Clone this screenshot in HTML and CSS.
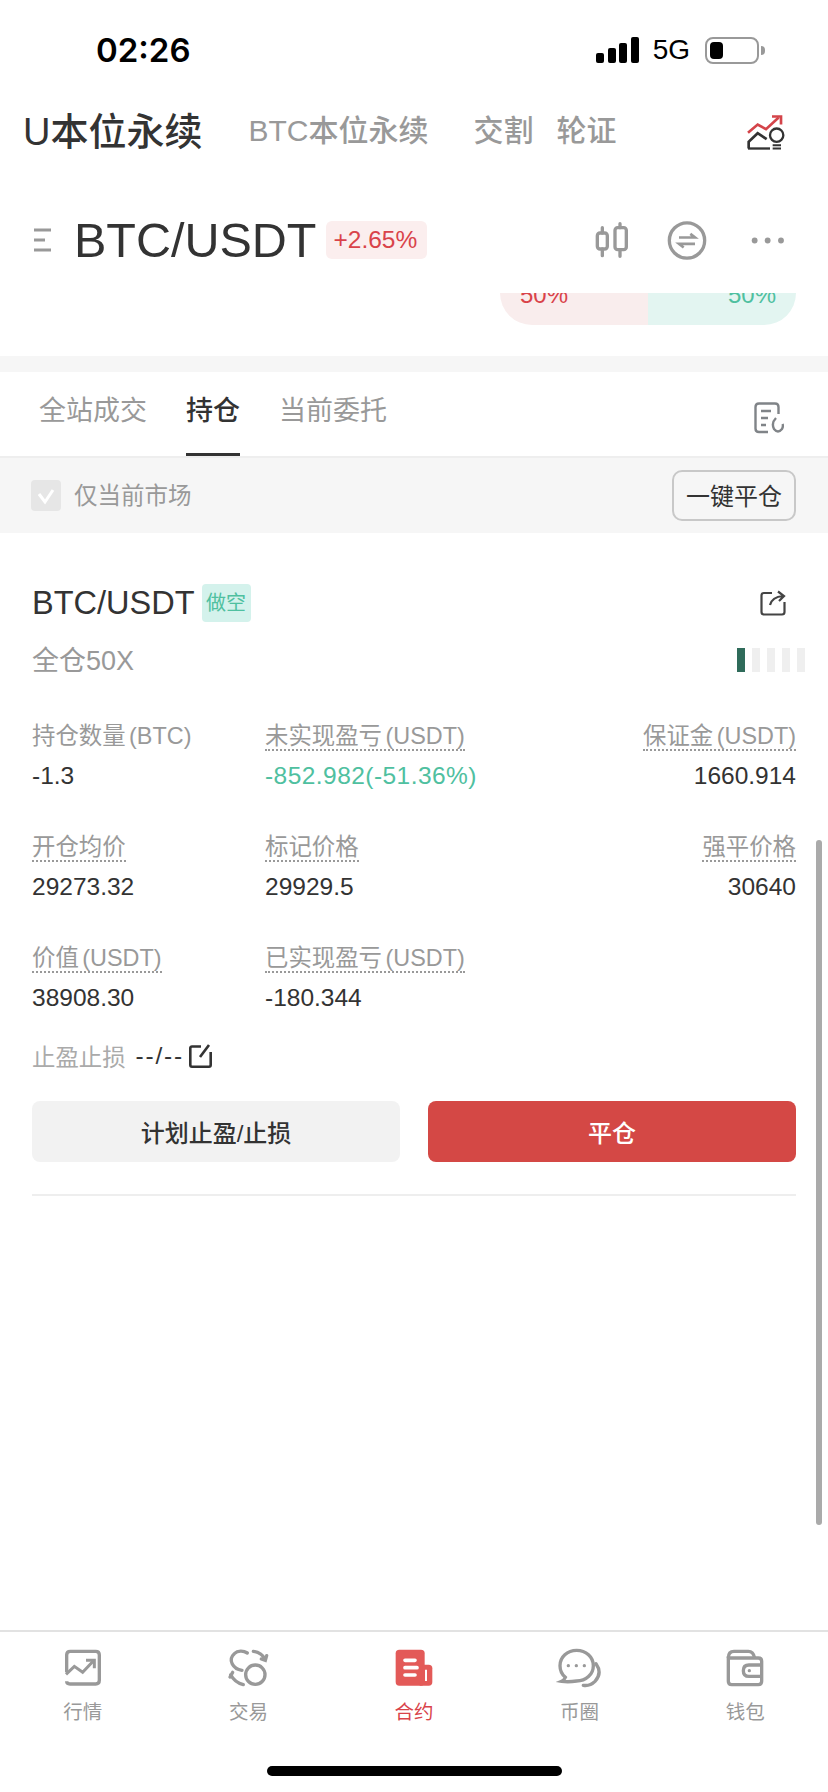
FILE: index.html
```html
<!DOCTYPE html>
<html lang="zh-CN">
<head>
  <meta charset="UTF-8">
  <meta name="viewport" content="width=device-width, initial-scale=1.0">
  <title>BTC/USDT 持仓</title>
  <link rel="stylesheet" href="styles.css">
</head>
<body>
  <div class="screen">
    <div class="status-bar">
      <span class="time">02:26</span>
      <div class="status-right">
        <svg class="signal" viewBox="0 0 43 26">
          <rect x="0" y="16" width="8" height="10" rx="2"/>
          <rect x="12" y="11" width="8" height="15" rx="2"/>
          <rect x="23" y="6" width="8" height="20" rx="2"/>
          <rect x="35" y="0" width="8" height="26" rx="2"/>
        </svg>
        <span class="net">5G</span>
        <div class="battery"><div class="battery-fill"></div></div>
        <div class="battery-nub"></div>
      </div>
    </div>

    <div class="market-tabs">
      <span class="market-main">U本位永续</span>
      <span class="market-tab">BTC本位永续</span>
      <span class="market-tab">交割</span>
      <span class="market-tab near">轮证</span>
      <svg class="idea-icon" viewBox="560 315 120 110" fill="none">
        <path d="M566 371 L595 346 L620 360 L658 325" stroke="#d4444a" stroke-width="8"/>
        <path d="M638 322 H665 V346" stroke="#d4444a" stroke-width="8"/>
        <path d="M568 418 V398 L595 372 L622 390" stroke="#333" stroke-width="8"/>
        <path d="M566 418 H632" stroke="#333" stroke-width="7"/>
        <circle cx="652" cy="378" r="20" stroke="#333" stroke-width="7"/>
        <path d="M640 408 H665 M640 418 H665" stroke="#333" stroke-width="6"/>
      </svg>
    </div>

    <div class="pair-head">
      <svg class="menu-icon" viewBox="0 0 17 24" fill="none" stroke="#999" stroke-width="3">
        <path d="M0 2 H17 M0 12 H11 M0 22 H17"/>
      </svg>
      <span class="pair-name">BTC/USDT</span>
      <span class="change-badge">+2.65%</span>
      <div class="pair-actions">
        <svg class="icon-candle" viewBox="100 635 105 108" fill="none" stroke="#999" stroke-width="10" stroke-linecap="round">
          <rect x="110" y="668" width="30" height="48" rx="8"/>
          <path d="M125 652 V668 M125 716 V736"/>
          <rect x="163" y="652" width="34" height="66" rx="8"/>
          <path d="M178 640 V652 M178 718 V738"/>
        </svg>
        <svg class="icon-swap" viewBox="320 632 120 116" fill="none" stroke="#999">
          <circle cx="380" cy="690" r="53" stroke-width="10"/>
          <path d="M356 681 H404 L390 670 M404 700 H356 L370 711" stroke-width="8"/>
        </svg>
        <svg class="icon-more" viewBox="570 670 105 40" fill="#999">
          <circle cx="583" cy="690" r="9"/>
          <circle cx="623" cy="690" r="9"/>
          <circle cx="664" cy="690" r="9"/>
        </svg>
      </div>
    </div>

    <div class="ratio-bar">
      <div class="ratio-buy"><span>50%</span></div>
      <div class="ratio-sell"><span>50%</span></div>
    </div>

    <div class="band"></div>

    <div class="list-tabs">
      <span class="list-tab">全站成交</span>
      <span class="list-tab active">持仓</span>
      <span class="list-tab">当前委托</span>
      <svg class="record-icon" viewBox="0 0 30 32" fill="none" stroke="#808488" stroke-width="2.4">
        <path d="M14 30 H5 Q1.5 30 1.5 26.5 V5 Q1.5 1.5 5 1.5 H21 Q24.5 1.5 24.5 5 V12"/>
        <path d="M7 9 H17 M7 16 H14 M7 23 H12"/>
        <path d="M22 16 Q17 21 20 27 Q24 32 28 27 Q29.5 24 28.5 22"/>
      </svg>
    </div>

    <div class="filter-row">
      <div class="checkbox">
        <svg viewBox="0 0 30 31" fill="none" stroke="#fff" stroke-width="3"><path d="M8 14 L14 22 L22 10"/></svg>
      </div>
      <span class="filter-text">仅当前市场</span>
      <button class="close-all">一键平仓</button>
    </div>

    <div class="position">
      <div class="pos-title">
        <span class="pos-name">BTC/USDT</span>
        <span class="side-tag">做空</span>
        <svg class="share-icon" viewBox="0 0 26 26" fill="none" stroke="#444" stroke-width="2.2">
          <path d="M12 3 H4 Q1.5 3 1.5 5.500 V22 Q1.500 24.500 4 24.500 H22 Q24.500 24.500 24.500 22 V12"/>
          <path d="M10 15 Q12 7 23 6 M18 1.500 L24 6 L19 11"/>
        </svg>
      </div>
      <div class="pos-sub">
        <span class="margin-mode">全仓50X</span>
        <div class="risk-bars">
          <i class="on"></i><i></i><i></i><i></i><i></i>
        </div>
      </div>

      <div class="stats">
        <div class="stat">
          <span class="stat-label plain">持仓数量 (BTC)</span>
          <span class="stat-value">-1.3</span>
        </div>
        <div class="stat">
          <span class="stat-label">未实现盈亏 (USDT)</span>
          <span class="stat-value green">-852.982(-51.36%)</span>
        </div>
        <div class="stat right">
          <span class="stat-label">保证金 (USDT)</span>
          <span class="stat-value">1660.914</span>
        </div>
        <div class="stat">
          <span class="stat-label">开仓均价</span>
          <span class="stat-value">29273.32</span>
        </div>
        <div class="stat">
          <span class="stat-label">标记价格</span>
          <span class="stat-value">29929.5</span>
        </div>
        <div class="stat right">
          <span class="stat-label">强平价格</span>
          <span class="stat-value">30640</span>
        </div>
        <div class="stat">
          <span class="stat-label">价值 (USDT)</span>
          <span class="stat-value">38908.30</span>
        </div>
        <div class="stat">
          <span class="stat-label">已实现盈亏 (USDT)</span>
          <span class="stat-value">-180.344</span>
        </div>
      </div>

      <div class="tpsl">
        <span class="tpsl-label">止盈止损</span>
        <span class="tpsl-value">--/--</span>
        <svg class="edit-icon" viewBox="0 0 23 24" fill="none" stroke="#333" stroke-width="2.600">
          <path d="M12 2.500 H3 Q1.300 2.500 1.300 4 V21 Q1.300 22.700 3 22.700 H20 Q21.700 22.700 21.700 21 V8"/>
          <path d="M11 13 L20 1"/>
        </svg>
      </div>

      <div class="pos-buttons">
        <button class="btn-plan">计划止盈/止损</button>
        <button class="btn-close">平仓</button>
      </div>
      <div class="pos-line"></div>
    </div>

    <div class="scrollbar"></div>

    <div class="tabbar">
      <div class="tab">
        <svg viewBox="116 55 150 120" fill="none" stroke="#999" stroke-width="10">
          <path d="M142 128 V76 Q142 65 153 65 H229 Q240 65 240 76 V152 Q240 163 229 163 H152 Q142 163 142 155"/>
          <path d="M140 134 L165 110 L190 128 L222 94" stroke-width="9"/>
          <path d="M200 92 H225 V116" stroke-width="9"/>
        </svg>
        <span>行情</span>
      </div>
      <div class="tab">
        <svg viewBox="611 55 150 120" fill="none" stroke="#999" stroke-width="10" stroke-linecap="round">
          <circle cx="708" cy="135" r="29"/>
          <path d="M668 122 C640 118 625 90 645 72 C655 62 672 62 684 70"/>
          <path d="M702 65 Q727 68 738 90 M742 78 L738 92 L726 88"/>
          <path d="M634 135 Q646 158 672 165 M632 142 L640 128"/>
        </svg>
        <span>交易</span>
      </div>
      <div class="tab active">
        <svg viewBox="28 55 150 120">
          <rect x="48" y="60" width="87" height="108" rx="11" fill="#e35a58"/>
          <path d="M130 105 H147 Q158 105 158 116 V157 Q158 168 147 168 H120 Z" fill="#e35a58"/>
          <path d="M139 120 V154" stroke="#fff" stroke-width="6"/>
          <path d="M76 92 H106 M76 114 H112 M76 136 H106" stroke="#fff" stroke-width="11" stroke-linecap="round"/>
        </svg>
        <span>合约</span>
      </div>
      <div class="tab">
        <svg viewBox="525 55 150 120" fill="none" stroke="#999" stroke-width="10" stroke-linecap="round">
          <path d="M590 62 C562 62 540 82 540 108 C540 125 548 136 556 143 Q552 152 545 155 C565 158 578 156 590 154 C618 154 640 134 640 108 C640 82 618 62 590 62 Z"/>
          <path d="M648 102 Q668 130 645 155 Q630 170 610 167"/>
          <circle cx="565" cy="108" r="5" fill="#999" stroke="none"/>
          <circle cx="589" cy="108" r="5" fill="#999" stroke="none"/>
          <circle cx="613" cy="108" r="5" fill="#999" stroke="none"/>
        </svg>
        <span>币圈</span>
      </div>
      <div class="tab">
        <svg viewBox="1020 55 150 120" fill="none" stroke="#999" stroke-width="10">
          <path d="M1045 85 V155 Q1045 165 1055 165 H1135 Q1145 165 1145 155 V95 Q1145 85 1135 85 H1045 Z"/>
          <path d="M1045 85 Q1045 65 1062 65 H1105 Q1120 65 1124 85"/>
          <path d="M1145 106 H1107 Q1090 106 1090 123 Q1090 140 1107 140 H1145"/>
          <circle cx="1108" cy="123" r="5" fill="#999" stroke="none"/>
        </svg>
        <span>钱包</span>
      </div>
    </div>

    <div class="home-bar"></div>
  </div>
</body>
</html>
```

FILE: styles.css
```css
body {
  margin: 0;
  background-color: #fff;
  font-family: "Liberation Sans", "Noto Sans CJK SC", sans-serif;
  color: #333;
}

.screen {
  position: relative;
  width: 828px;
  height: 1792px;
  overflow: hidden;
  background-color: #fff;
  display: flex;
  flex-direction: column;
}

/* status bar */
.status-bar {
  height: 100px;
  padding: 0 63px 0 96px;
  display: flex;
  align-items: center;
  justify-content: space-between;
  box-sizing: border-box;
}

.time {
  font-family: Inter, "Liberation Sans", sans-serif;
  font-size: 33px;
  font-weight: 600;
  color: #000;
}

.status-right {
  display: flex;
  align-items: center;
}

.signal {
  width: 43px;
  height: 26px;
  fill: #000;
}

.net {
  margin-left: 14px;
  font-size: 28px;
  color: #000;
}

.battery {
  width: 54px;
  height: 27px;
  margin-left: 15px;
  padding: 3px;
  border: 2px solid #999;
  border-radius: 8px;
  box-sizing: border-box;
}

.battery-fill {
  width: 13px;
  height: 17px;
  background-color: #000;
  border-radius: 4px;
}

.battery-nub {
  width: 4px;
  height: 9px;
  margin-left: 2px;
  background-color: #999;
  border-radius: 0 4px 4px 0;
}

/* market tabs */
.market-tabs {
  height: 60px;
  margin-bottom: 27px;
  padding: 0 42px 4px 23px;
  display: flex;
  align-items: center;
  box-sizing: border-box;
}

.market-main {
  font-size: 38px;
  font-weight: 500;
  color: #333;
  margin-right: 46px;
}

.market-tab {
  font-size: 30px;
  font-weight: 500;
  color: #999;
  margin-right: 45px;
}

.market-tab.near {
  margin-left: -22px;
}

.idea-icon {
  width: 40px;
  height: 37px;
  margin-left: auto;
  margin-top: 9px;
}

/* pair header */
.pair-head {
  height: 106px;
  padding: 0 43px 0 34px;
  display: flex;
  align-items: center;
  box-sizing: border-box;
}

.menu-icon {
  width: 17px;
  height: 24px;
}

.pair-name {
  margin-left: 23px;
  font-size: 48.5px;
  color: #333;
}

.change-badge {
  margin-left: 9px;
  height: 38px;
  line-height: 38px;
  padding: 0 10px 0 8px;
  font-size: 24.5px;
  color: #d9434a;
  background-color: #fbeeee;
  border-radius: 6px;
}

.pair-actions {
  margin-left: auto;
  display: flex;
  align-items: center;
}

.icon-candle {
  width: 35px;
  height: 36px;
}

.icon-swap {
  width: 40px;
  height: 39px;
  margin-left: 38px;
}

.icon-more {
  width: 35px;
  height: 13px;
  margin-left: 43px;
}

/* clipped long/short ratio */
.ratio-bar {
  width: 296px;
  height: 32px;
  margin-left: 500px;
  display: flex;
  overflow: hidden;
  border-radius: 0 0 32px 32px;
  font-size: 24px;
  line-height: 20px;
}

.ratio-buy {
  width: 148px;
  background-color: #f9eded;
  color: #d9434a;
}

.ratio-buy span {
  display: block;
  margin: -8px 0 0 20px;
}

.ratio-sell {
  width: 148px;
  background-color: #e3f5f1;
  color: #4fc0a0;
  text-align: right;
}

.ratio-sell span {
  display: block;
  margin: -8px 20px 0 0;
}

.band {
  height: 16px;
  margin-top: 31px;
  background-color: #f6f6f6;
}

/* list tabs */
.list-tabs {
  height: 86px;
  padding: 0 44px 0 39px;
  display: flex;
  align-items: stretch;
  border-bottom: 2px solid #eee;
  box-sizing: border-box;
}

.list-tab {
  height: 84px;
  line-height: 78px;
  margin-right: 39px;
  font-size: 27px;
  color: #999;
  box-sizing: border-box;
}

.list-tab.active {
  color: #333;
  font-weight: 500;
  border-bottom: 3px solid #333;
}

.record-icon {
  width: 30px;
  height: 32px;
  margin-left: auto;
  margin-top: 30px;
}

/* filter row */
.filter-row {
  height: 75px;
  padding: 0 32px 0 31px;
  display: flex;
  align-items: center;
  background-color: #f6f6f6;
}

.checkbox {
  width: 30px;
  height: 31px;
  background-color: #e6e6e6;
  border-radius: 4px;
}

.checkbox svg {
  display: block;
}

.filter-text {
  margin-left: 13px;
  margin-bottom: 4px;
  font-size: 23.5px;
  color: #999;
}

.close-all {
  margin-left: auto;
  width: 124px;
  height: 51px;
  padding: 0 0 3px;
  border: 2px solid #c8c8c8;
  border-radius: 10px;
  background-color: #f6f6f6;
  font-family: inherit;
  font-size: 24px;
  color: #333;
}

/* position card */
.position {
  padding: 51px 32px 0;
}

.pos-title {
  height: 38px;
  display: flex;
  align-items: center;
}

.pos-name {
  font-size: 32.5px;
  color: #333;
}

.side-tag {
  margin-left: 7px;
  width: 49px;
  height: 38px;
  line-height: 38px;
  text-align: center;
  font-size: 20px;
  color: #4fc0a0;
  background-color: #d4f2ec;
  border-radius: 4px;
}

.share-icon {
  width: 26px;
  height: 26px;
  margin-left: auto;
  margin-right: 10px;
}

.pos-sub {
  height: 36px;
  margin-top: 20px;
  display: flex;
  align-items: center;
}

.margin-mode {
  margin-bottom: 4px;
  font-size: 27px;
  color: #999;
}

.risk-bars {
  margin-left: auto;
  margin-right: -9px;
  display: flex;
  gap: 7px;
}

.risk-bars i {
  display: block;
  width: 8px;
  height: 24px;
  background-color: #efefef;
}

.risk-bars i.on {
  background-color: #2f6b5a;
}

.stats {
  margin-top: 43px;
  display: grid;
  grid-template-columns: 233px 1fr auto;
  row-gap: 41px;
}

.stat {
  display: flex;
  flex-direction: column;
  align-items: flex-start;
}

.stat.right {
  align-items: flex-end;
  text-align: right;
}

.stat-label {
  height: 28px;
  line-height: 30px;
  font-size: 23.4px;
  word-spacing: -3px;
  color: #999;
  border-bottom: 2px dotted #999;
}

.stat-label.plain {
  border-bottom-color: transparent;
}

.stat-value {
  margin-top: 10px;
  height: 30px;
  line-height: 30px;
  font-size: 24.5px;
  color: #333;
}

.stat-value.green {
  color: #4fc0a0;
  letter-spacing: 0.45px;
}

.tpsl {
  height: 30px;
  margin-top: 28px;
  display: flex;
  align-items: center;
}

.tpsl-label {
  font-size: 23.4px;
  color: #aaa;
}

.tpsl-value {
  margin-left: 10px;
  font-size: 24.5px;
  letter-spacing: 1.8px;
  color: #333;
}

.edit-icon {
  width: 23px;
  height: 24px;
  margin-left: 5px;
}

.pos-buttons {
  margin-top: 30px;
  display: flex;
  gap: 28px;
}

.pos-buttons button {
  flex: 1;
  height: 61px;
  border: none;
  border-radius: 8px;
  font-family: inherit;
  font-size: 24px;
  font-weight: 500;
}

.btn-plan {
  background-color: #f2f2f2;
  color: #333;
}

.btn-close {
  background-color: #d44845;
  color: #fff;
}

.pos-line {
  margin-top: 32px;
  height: 2px;
  background-color: #eee;
}

.scrollbar {
  position: absolute;
  top: 840px;
  right: 6px;
  width: 6px;
  height: 685px;
  background-color: #aaa;
  border-radius: 3px;
}

/* bottom tabs */
.tabbar {
  position: absolute;
  left: 0;
  right: 0;
  bottom: 0;
  height: 162px;
  padding-top: 16px;
  display: flex;
  align-items: flex-start;
  border-top: 2px solid #e2e2e2;
  background-color: #fff;
  box-sizing: border-box;
}

.tab {
  flex: 1;
  display: flex;
  flex-direction: column;
  align-items: center;
  font-size: 19.5px;
  color: #999;
}

.tab svg {
  width: 50px;
  height: 40px;
}

.tab span {
  margin-top: 10px;
  line-height: 28px;
}

.tab.active {
  color: #d9434a;
}

.home-bar {
  position: absolute;
  left: 267px;
  bottom: 16px;
  width: 295px;
  height: 10px;
  background-color: #000;
  border-radius: 5px;
}
```
